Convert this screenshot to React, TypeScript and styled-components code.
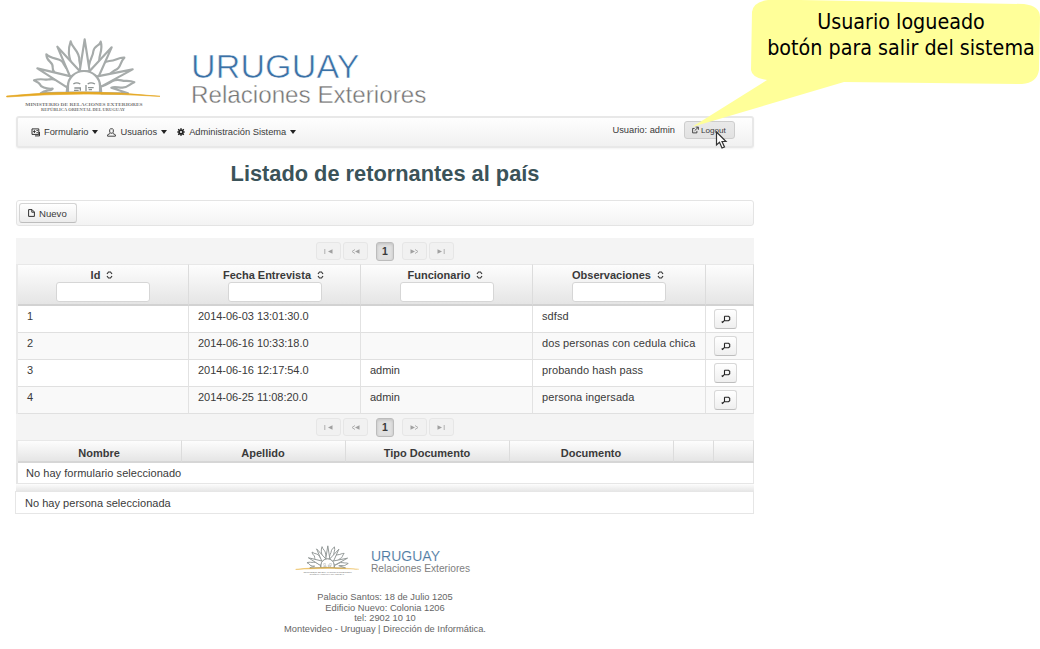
import React from "react";
import styled, { createGlobalStyle } from "styled-components";

const Global = createGlobalStyle`
  * { box-sizing: border-box; }
  body {
    margin: 0;
    background: #fff;
    font-family: "Liberation Sans", Arial, sans-serif;
    font-size: 11px;
    color: #3a3a3a;
    overflow: hidden;
  }
`;

const Screen = styled.div`
  position: relative;
  width: 1040px;
  height: 649px;
`;

const Page = styled.main`
  width: 738px;
  margin-left: 16px;
  display: flex;
  flex-direction: column;
`;

const Header = styled.header`
  height: 116px;
  margin-left: -16px;
  padding-top: 30px;
  display: flex;
`;

const Emblem = styled.svg<{ $w: number }>`
  display: block;
  flex: none;
  width: ${(p) => p.$w}px;
  height: ${(p) => p.$w / 2}px;
`;

const Wordmark = styled.div<{ $small?: boolean }>`
  padding-top: ${(p) => (p.$small ? 8 : 19)}px;
  padding-left: ${(p) => (p.$small ? 4 : 11)}px;
  white-space: nowrap;
`;

const Country = styled.div<{ $small?: boolean }>`
  font-size: ${(p) => (p.$small ? 14 : 34)}px;
  line-height: ${(p) => (p.$small ? 13 : 35)}px;
  letter-spacing: ${(p) => (p.$small ? 0 : 0.15)}px;
  color: ${(p) => (p.$small ? "#4f7ba3" : "#3b71a6")};
  -webkit-text-stroke: ${(p) => (p.$small ? 0.1 : 0.6)}px #fff;
`;

const Ministry = styled.div<{ $small?: boolean }>`
  font-size: ${(p) => (p.$small ? 10.2 : 24.2)}px;
  line-height: ${(p) => (p.$small ? 11 : 22)}px;
  color: ${(p) => (p.$small ? "#808080" : "#757575")};
  -webkit-text-stroke: ${(p) => (p.$small ? 0 : 0.4)}px #fff;
`;

const MenuBar = styled.nav`
  height: 32px;
  border: 2px solid #e8e8e8;
  border-radius: 3px;
  background: linear-gradient(#fefefe, #f1f1f1);
  box-shadow: 0 1px 2px rgba(0, 0, 0, 0.05);
  display: flex;
  align-items: center;
  padding: 0 17px 0 13px;
  font-size: 9.3px;
`;

const MenuItem = styled.div<{ $gap: number }>`
  display: flex;
  align-items: center;
  margin-right: ${(p) => p.$gap}px;
  white-space: nowrap;
  svg { margin-right: 4px; }
`;

const Caret = styled.i`
  border: 3px solid transparent;
  border-top: 4px solid #222;
  border-bottom: 0;
  margin-left: 4px;
`;

const User = styled.span`
  margin: -4px 9px 0 auto;
`;

const LogoutButton = styled.button`
  width: 51px;
  height: 18px;
  margin-top: -4px;
  padding: 0 0 0 7px;
  border: 1px solid #cdcdcd;
  border-radius: 3px;
  background: linear-gradient(#e9e9e9, #e2e2e2);
  font: 8.1px "Liberation Sans", sans-serif;
  color: #3a3a3a;
  display: flex;
  align-items: center;
  gap: 2px;
`;

const Title = styled.h1`
  margin: 13px 0 14px;
  height: 25px;
  line-height: 25px;
  font-size: 21.8px;
  text-align: center;
  color: #3b5359;
`;

const Toolbar = styled.div`
  height: 26px;
  margin-bottom: 12px;
  border: 1px solid #e4e4e4;
  border-radius: 3px;
  background: linear-gradient(#fff, #f3f3f3);
  padding: 2px;
`;

const NewButton = styled.button`
  width: 58px;
  height: 20px;
  padding: 0 0 0 8px;
  border: 1px solid #d4d4d4;
  border-bottom-color: #bdbdbd;
  border-radius: 3px;
  background: linear-gradient(#fff, #ececec);
  font: 9.6px "Liberation Sans", sans-serif;
  color: #3a3a3a;
  display: flex;
  align-items: center;
  gap: 4px;
`;

const Paginator = styled.div`
  height: 26px;
  background: #f4f4f4;
  display: flex;
  align-items: center;
  justify-content: center;
`;

const PageButton = styled.span<{ $active?: boolean; $gap?: number }>`
  width: ${(p) => (p.$active ? 18 : 25)}px;
  height: ${(p) => (p.$active ? 19 : 18)}px;
  margin-right: ${(p) => p.$gap ?? 0}px;
  border: 1px solid ${(p) => (p.$active ? "#bcbcbc" : "#e6e6e6")};
  border-radius: 3px;
  background: ${(p) => (p.$active ? "#e0e0e0" : "#f1f1f1")};
  box-shadow: ${(p) => (p.$active ? "inset 0 1px 3px rgba(0,0,0,.15)" : "none")};
  font-size: 10.5px;
  font-weight: bold;
  display: flex;
  align-items: center;
  justify-content: center;
`;

const Grid = styled.div<{ $cols: string }>`
  display: grid;
  grid-template-columns: ${(p) => p.$cols};
  border-left: 2px solid #eaeaea;
`;

const HeadCell = styled.div<{ $tall?: boolean }>`
  height: ${(p) => (p.$tall ? 42 : 23)}px;
  border-right: 1px solid #dcdcdc;
  border-top: 1px solid #e8e8e8;
  border-bottom: 2px solid ${(p) => (p.$tall ? "#d2d2d2" : "#d6d6d6")};
  background: linear-gradient(#fdfdfd, #e5e5e5);
  padding-top: ${(p) => (p.$tall ? 3 : 5)}px;
  padding-right: ${(p) => (p.$tall ? 0 : 1)}px;
  font-weight: bold;
  line-height: 14px;
  display: flex;
  flex-direction: column;
  align-items: center;
`;

const HeadLabel = styled.div`
  display: flex;
  align-items: center;
  gap: 6px;
  height: 14px;
  padding-right: 2px;
`;

const Filter = styled.input`
  width: 94px;
  height: 20px;
  border: 1px solid #d6d6d6;
  border-radius: 3px;
  background: #fff;
`;

const Cell = styled.div<{ $odd?: boolean; $wide?: boolean; $h: number }>`
  height: ${(p) => p.$h}px;
  border-right: 1px solid #e2e2e2;
  border-bottom: 1px solid #e0e0e0;
  background: ${(p) => (p.$odd ? "#f9f9f9" : "#fff")};
  padding: 3px 0 0 9px;
  letter-spacing: ${(p) => (p.$wide ? 0.08 : -0.04)}px;
  line-height: 15px;
  white-space: nowrap;
`;

const ViewButton = styled.button`
  width: 23px;
  height: 20px;
  margin-left: -1px;
  padding: 1px 0 0;
  border: 1px solid #d8d8d8;
  border-bottom-color: #bdbdbd;
  border-radius: 3px;
  background: linear-gradient(#fff, #efefef);
  display: flex;
  align-items: center;
  justify-content: center;
`;

const EmptyRow = styled.div`
  height: 21px;
  border: 1px solid #e6e6e6;
  border-top: 0;
  border-left-width: 2px;
  padding-left: 8px;
  line-height: 21px;
  letter-spacing: 0.04px;
`;

const Divider = styled.div`
  height: 7px;
  background: linear-gradient(#fdfdfd, #e7e7e7);
`;

const PersonPanel = styled.div`
  height: 23px;
  border: 1px solid #e6e6e6;
  margin-left: -1px;
  padding-left: 9px;
  line-height: 22px;
  letter-spacing: 0.03px;
`;

const Footer = styled.footer`
  margin-top: 28px;
  display: flex;
  flex-direction: column;
  align-items: center;
`;

const FooterLogo = styled.div`
  display: flex;
  width: 184px;
  height: 50px;
`;

const Address = styled.address`
  font-style: normal;
  font-size: 9.3px;
  line-height: 10.6px;
  text-align: center;
  color: #666;
`;

const Callout = styled.div`
  position: absolute;
  left: 690px;
  top: 0;
  width: 350px;
  height: 150px;
`;

const Bubble = styled.svg`
  position: absolute;
  inset: 0;
`;

const CalloutText = styled.p`
  position: absolute;
  left: 72px;
  top: 9px;
  width: 278px;
  margin: 0;
  font: 21.3px/26px "DejaVu Sans Condensed", "DejaVu Sans", sans-serif;
  font-stretch: condensed;
  color: #000;
  text-align: center;
  white-space: nowrap;
`;

const Logo = ({ w }: { w: number }) => (
  <Emblem $w={w} viewBox="0 0 540 270">
    <g fill="#fff" stroke={w < 100 ? "#8f9594" : "#a6abaa"} strokeWidth={w < 100 ? 7 : 6.5} strokeLinejoin="round">
      <path d="M216 138C226 104 194 84 212 34C216 56 240 62 238 92L244 124Z" />
      <path d="M268 124C260 98 280 82 280 64C284 44 298 50 302 35C312 64 290 80 300 104C296 120 292 128 286 138Z" />
      <path d="M203 164C188 142 156 134 158 112C160 94 140 98 139 73C158 92 184 80 192 104C198 118 212 124 224 142Z" />
      <path d="M282 142C302 120 302 94 328 93C350 92 352 82 373 83C358 98 364 114 346 120C326 130 320 148 299 162Z" />
      <path d="M122 190C136 178 154 184 158 176C136 178 122 170 119 162C114 155 108 155 102 151C126 143 134 152 148 148C170 144 182 158 202 170L200 188Z" />
      <path d="M302 170C330 164 338 144 364 151C378 155 388 150 403 157C388 162 384 174 366 173C354 173 344 169 334 173L384 190H304Z" />
      <path d="M239 124L254 28L269 124Z" />
      <path d="M212 144L172 50L241 125Z" />
      <path d="M267 125L335 52L294 144Z" />
      <path d="M201 172L112 115L216 140Z" />
      <path d="M288 140L398 118L303 170Z" />
      <path d="M204 188V168A48 45 0 0 1 300 168V188Z" />
    </g>
    <path d="M220 162Q230 155 241 162M263 162Q272 155 285 162M223 174H241V182M264 173H281M266 179H276M258 165V184M222 181H236" fill="none" stroke="#8d9392" strokeWidth="4" />
    <path d="M20 198Q250 174 480 199Q250 184 20 201Z" fill="#e5a823" stroke="#e5a823" strokeWidth="2" />
    <g fontFamily="Liberation Serif, serif" fontWeight="bold" fill="#777">
      <text x="76" y="227" fontSize="15" textLength="352" lengthAdjust="spacingAndGlyphs">MINISTERIO DE RELACIONES EXTERIORES</text>
      <text x="123" y="244" fontSize="11" textLength="252" lengthAdjust="spacingAndGlyphs">REPÚBLICA ORIENTAL DEL URUGUAY</text>
    </g>
  </Emblem>
);

const Sort = () => (
  <svg width="7" height="8" viewBox="0 0 7 8" fill="none" stroke="#333" strokeWidth="1.2">
    <path d="M1 3L2.5 1H4.5L6 3M1 5L2.5 7H4.5L6 5" />
  </svg>
);

const Lens = () => (
  <svg width="10" height="9" viewBox="0 0 10 9" fill="none" stroke="#222" strokeWidth="1.1">
    <path d="M3.5 1.3H7.5L8.7 2.3V4.7L7.5 5.7H3.5V1.3M3.8 5.2L1 7.8M.6 6.7H3" />
  </svg>
);

const FormIcon = () => (
  <svg width="9" height="9" viewBox="0 0 9 9" fill="none" stroke="#333">
    <path d="M1 .9H7.8V6.4H1ZM4 7.9H8.5V4" />
    <path d="M2.2 3.5H4.6M3.4 2.2V5M5.5 2.5H6.8M5.5 4.6H6.8" />
  </svg>
);

const UserIcon = () => (
  <svg width="9" height="9" viewBox="0 0 9 9" fill="none" stroke="#444">
    <path d="M2.7 1.5L3.5 .8H5.5L6.3 1.5V4L5.5 5.2H3.5L2.7 4ZM3 5.5L.6 6.8V8.2H8.4V6.8L6 5.5" />
  </svg>
);

const GearIcon = () => (
  <svg width="8" height="8" viewBox="0 0 9 9" fill="none" stroke="#222">
    <circle cx="4.5" cy="4.5" r="2.2" strokeWidth="2" />
    <path d="M4.5 0V2M4.5 7V9M0 4.5H2M7 4.5H9M1.3 1.3L2.6 2.6M6.4 6.4L7.7 7.7M7.7 1.3L6.4 2.6M2.6 6.4L1.3 7.7" strokeWidth="1.3" />
  </svg>
);

const FileIcon = () => (
  <svg width="7" height="8" viewBox="0 0 7 8" fill="none" stroke="#333">
    <path d="M.6 .6H4L6.4 3V7.4H.6ZM3.8 .6V3.2H6.4" />
  </svg>
);

const ExitIcon = () => (
  <svg width="7" height="8" viewBox="0 0 8 8" fill="none" stroke="#333">
    <path d="M3 2.2H.7V7.3H5.6V5M3 4.8L7 1M4.2 .7H7.3V3.8" />
  </svg>
);

type Kind = "first" | "prev" | "next" | "last";
const arrows: Record<Kind, string> = {
  first: "M.8 1V6",
  prev: "M4 1.5L1 3.5L4 5.5",
  next: "M1 1.5L4 3.5L1 5.5",
  last: "M3.2 1V6",
};

const PageArrow = ({ kind }: { kind: Kind }) => {
  const back = kind === "first" || kind === "prev";
  return (
    <svg width="9" height="7" viewBox="0 0 9 7">
      <path d={back ? "M8.5 1.3V5.7L4 3.5Z" : "M.5 1.3V5.7L5 3.5Z"} fill="#a0a0a0" />
      <path d={arrows[kind]} transform={back ? "" : "translate(4 0)"} fill="none" stroke="#b0b0b0" />
    </svg>
  );
};

const Pager = () => (
  <Paginator>
    <PageButton $gap={2}><PageArrow kind="first" /></PageButton>
    <PageButton $gap={8}><PageArrow kind="prev" /></PageButton>
    <PageButton $active $gap={8}>1</PageButton>
    <PageButton $gap={2}><PageArrow kind="next" /></PageButton>
    <PageButton><PageArrow kind="last" /></PageButton>
  </Paginator>
);

const rows = [
  ["1", "2014-06-03 13:01:30.0", "", "sdfsd"],
  ["2", "2014-06-16 10:33:18.0", "", "dos personas con cedula chica"],
  ["3", "2014-06-16 12:17:54.0", "admin", "probando hash pass"],
  ["4", "2014-06-25 11:08:20.0", "admin", "persona ingersada"],
];

export default function App() {
  return (
    <Screen>
      <Global />
      <Page>
        <Header>
          <Logo w={180} />
          <Wordmark>
            <Country>URUGUAY</Country>
            <Ministry>Relaciones Exteriores</Ministry>
          </Wordmark>
        </Header>
        <MenuBar>
          <MenuItem $gap={9}><FormIcon />Formulario<Caret /></MenuItem>
          <MenuItem $gap={10}><UserIcon />Usuarios<Caret /></MenuItem>
          <MenuItem $gap={0}><GearIcon />Administración Sistema<Caret /></MenuItem>
          <User>Usuario: admin</User>
          <LogoutButton><ExitIcon />Logout</LogoutButton>
        </MenuBar>
        <Title>Listado de retornantes al país</Title>
        <Toolbar>
          <NewButton><FileIcon />Nuevo</NewButton>
        </Toolbar>
        <Pager />
        <Grid $cols="171px 172px 172px 173px 1fr">
          {["Id", "Fecha Entrevista", "Funcionario", "Observaciones"].map((h) => (
            <HeadCell $tall key={h}>
              <HeadLabel>{h}<Sort /></HeadLabel>
              <Filter />
            </HeadCell>
          ))}
          <HeadCell $tall />
          {rows.map((row, i) => (
            <React.Fragment key={row[0]}>
              {row.map((value, c) => (
                <Cell key={c} $odd={i % 2 === 1} $wide={c === 3} $h={27}>{value}</Cell>
              ))}
              <Cell $odd={i % 2 === 1} $h={27}><ViewButton><Lens /></ViewButton></Cell>
            </React.Fragment>
          ))}
        </Grid>
        <Pager />
        <Grid $cols="164px 164px 164px 164px 40px 1fr">
          {["Nombre", "Apellido", "Tipo Documento", "Documento", "", ""].map((h, i) => (
            <HeadCell key={i}>{h}</HeadCell>
          ))}
        </Grid>
        <EmptyRow>No hay formulario seleccionado</EmptyRow>
        <Divider />
        <PersonPanel>No hay persona seleccionada</PersonPanel>
        <Footer>
          <FooterLogo>
            <Logo w={74} />
            <Wordmark $small>
              <Country $small>URUGUAY</Country>
              <Ministry $small>Relaciones Exteriores</Ministry>
            </Wordmark>
          </FooterLogo>
          <Address>
            Palacio Santos: 18 de Julio 1205<br />
            Edificio Nuevo: Colonia 1206<br />
            tel: 2902 10 10<br />
            Montevideo - Uruguay | Dirección de Informática.
          </Address>
        </Footer>
      </Page>
      <Callout>
        <Bubble width="350" height="150" viewBox="0 0 350 150">
          <path d="M78 0H110L334 4Q350 6 350 17L349 70Q347 83 332 84L154 82L2 127L77 80Q62 78 61 70L62 12Q63 2 78 0Z" fill="#ffff99" />
          <path d="M26.5 132V145L29.5 142.3L32 148L34.5 147L32 141.5H36Z" fill="#fff" stroke="#333" strokeWidth="1.2" />
        </Bubble>
        <CalloutText>Usuario logueado<br />botón para salir del sistema</CalloutText>
      </Callout>
    </Screen>
  );
}
